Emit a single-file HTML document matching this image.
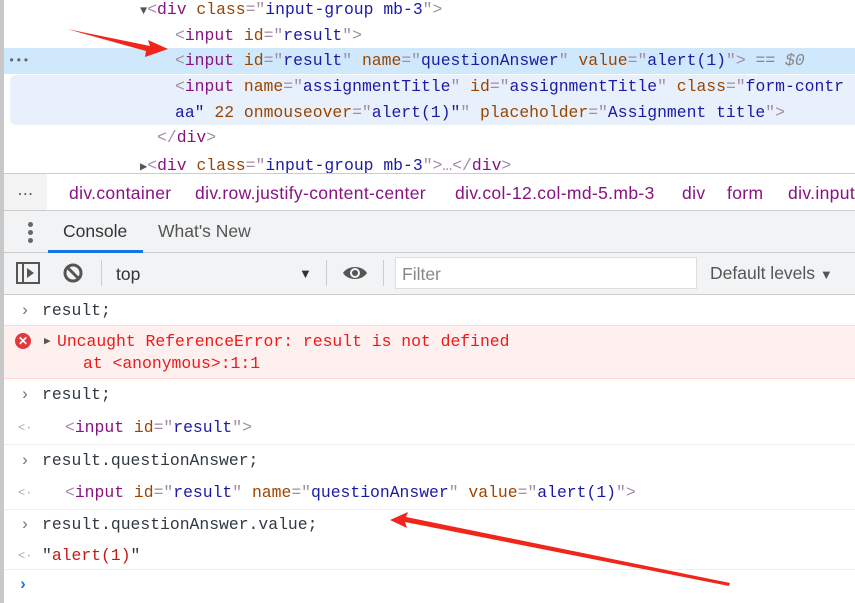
<!DOCTYPE html><html><head><style>
html,body{overflow:hidden}
body{margin:0;width:855px;height:603px;overflow:hidden;background:#fff;position:relative;font-family:"Liberation Mono",monospace;font-size:16.4px}
.a{position:absolute;white-space:pre;line-height:20px}
.t{color:#881280}.n{color:#994500}.v{color:#1a1aa6}.p{color:#a38ca6}.k{color:#303942}
.s{font-family:"Liberation Sans",sans-serif}
.r{position:absolute;left:4px;right:0;overflow:hidden}
.clip{position:absolute;left:0;top:0;width:855px;height:603px;overflow:hidden}
</style></head><body><div class="clip">
<div style="position:absolute;left:0;top:0;width:4px;height:603px;background:#c8c8c8"></div>
<div class="r" style="top:48px;height:26px;background:#cfe8fc"></div>
<div style="position:absolute;left:10px;right:0;top:75px;height:50px;background:#e8f0fb;border-radius:6px 0 0 6px"></div>
<div class="a" style="left:140px;top:0"><span style="color:#555;font-size:12px">▼</span><span class="p">&lt;</span><span class="t">div</span> <span class="n">class</span><span class="p">="</span><span class="v">input-group mb-3</span><span class="p">"&gt;</span></div>
<div class="a" style="left:175px;top:26px"><span class="p">&lt;</span><span class="t">input</span> <span class="n">id</span><span class="p">="</span><span class="v">result</span><span class="p">"&gt;</span></div>
<div class="a" style="left:8px;top:51px;color:#666;font-size:12px">•••</div>
<div class="a" style="left:175px;top:51px"><span class="p">&lt;</span><span class="t">input</span> <span class="n">id</span><span class="p">="</span><span class="v">result</span><span class="p">"</span> <span class="n">name</span><span class="p">="</span><span class="v">questionAnswer</span><span class="p">"</span> <span class="n">value</span><span class="p">="</span><span class="v">alert(1)</span><span class="p">"&gt;</span> <i style="color:#888">== $0</i></div>
<div class="a" style="left:175px;top:77px"><span class="p">&lt;</span><span class="t">input</span> <span class="n">name</span><span class="p">="</span><span class="v">assignmentTitle</span><span class="p">"</span> <span class="n">id</span><span class="p">="</span><span class="v">assignmentTitle</span><span class="p">"</span> <span class="n">class</span><span class="p">="</span><span class="v">form-contr</span></div>
<div class="a" style="left:175px;top:103px"><span class="v">aa"</span> <span class="n">22</span> <span class="n">onmouseover</span><span class="p">="</span><span class="v">alert(1)"</span><span class="p">"</span> <span class="n">placeholder</span><span class="p">="</span><span class="v">Assignment title</span><span class="p">"&gt;</span></div>
<div class="a" style="left:157px;top:128px"><span class="p">&lt;/</span><span class="t">div</span><span class="p">&gt;</span></div>
<div class="a" style="left:140px;top:156px"><span style="color:#555;font-size:12px">▶</span><span class="p">&lt;</span><span class="t">div</span> <span class="n">class</span><span class="p">="</span><span class="v">input-group mb-3</span><span class="p">"&gt;…&lt;/</span><span class="t">div</span><span class="p">&gt;</span></div>
<div class="r" style="top:173px;height:1px;background:#ccc"></div>
<div class="r s" style="top:174px;height:36px;background:#fff;font-size:17.5px;letter-spacing:0.35px;color:#881280">
<div style="position:absolute;left:0;top:0;width:43px;height:36px;background:#f3f3f3;color:#555;text-align:center;line-height:30px">...</div>
<div class="a" style="left:65px;top:9px">div.container</div><div class="a" style="left:191px;top:9px">div.row.justify-content-center</div><div class="a" style="left:451px;top:9px">div.col-12.col-md-5.mb-3</div><div class="a" style="left:678px;top:9px">div</div><div class="a" style="left:723px;top:9px">form</div><div class="a" style="left:784px;top:9px">div.input-group</div></div>
<div class="r" style="top:210px;height:83px;background:#f1f3f4;border-top:1px solid #ccc;border-bottom:1px solid #ccc"></div>
<div class="r" style="top:252px;height:1px;background:#ccc"></div>
<div style="position:absolute;left:28px;top:222px;width:5px;height:5px;border-radius:3px;background:#666;box-shadow:0 8px #666,0 16px #666"></div>
<div class="a s" style="left:63px;top:221px;font-size:17.5px;color:#333">Console</div>
<div class="a s" style="left:158px;top:221px;font-size:17.5px;color:#555">What's New</div>
<div style="position:absolute;left:48px;top:250px;width:95px;height:3px;background:#1a73e8"></div>
<svg style="position:absolute;left:16px;top:262px" width="24" height="22"><rect x="1" y="1" width="22" height="20" fill="none" stroke="#555" stroke-width="2"/><line x1="7" y1="1" x2="7" y2="21" stroke="#555" stroke-width="2"/><path d="M11 6l7 5-7 5z" fill="#555"/></svg>
<svg style="position:absolute;left:63px;top:263px" width="20" height="20"><circle cx="10" cy="10" r="8" fill="none" stroke="#555" stroke-width="3"/><line x1="4.5" y1="4.5" x2="15.5" y2="15.5" stroke="#555" stroke-width="3"/></svg>
<div style="position:absolute;left:101px;top:260px;width:1px;height:26px;background:#ccc"></div>
<div class="a s" style="left:116px;top:264px;font-size:17.5px;color:#333">top</div>
<div class="a s" style="left:299px;top:264px;font-size:13px;color:#333">▼</div>
<div style="position:absolute;left:326px;top:260px;width:1px;height:26px;background:#ccc"></div>
<svg style="position:absolute;left:342px;top:264px" width="26" height="18"><path d="M1 9C6 1 20 1 25 9C20 17 6 17 1 9z" fill="#555"/><circle cx="13" cy="9" r="5" fill="#f1f3f4"/><circle cx="13" cy="9" r="3" fill="#555"/></svg>
<div style="position:absolute;left:383px;top:260px;width:1px;height:26px;background:#ccc"></div>
<div style="position:absolute;left:395px;top:257px;width:300px;height:30px;background:#fff;border:1px solid #ddd"></div>
<div class="a s" style="left:402px;top:264px;font-size:17.5px;color:#888">Filter</div>
<div class="a s" style="left:710px;top:263px;font-size:17.5px;color:#555">Default levels <span style="font-size:13px">▼</span></div>
<div class="r" style="top:325px;height:52px;background:#fff0f0;border-top:1px solid #ffd6d6;border-bottom:1px solid #ffd6d6"></div>
<div class="r" style="top:444px;height:1px;background:#eee"></div>
<div class="r" style="top:509px;height:1px;background:#eee"></div>
<div class="r" style="top:569px;height:1px;background:#eee"></div>
<div class="a k" style="left:20px;top:301px;color:#777">›</div><div class="a k" style="left:42px;top:301px">result;</div>
<div style="position:absolute;left:15px;top:333px;width:16px;height:16px;border-radius:8px;background:#e0393e;color:#fff;font:bold 12px/16px 'Liberation Sans';text-align:center">✕</div>
<div class="a" style="left:44px;top:332px;color:#555;font-size:11px">▶</div>
<div class="a" style="left:57px;top:332px;color:#f01818">Uncaught ReferenceError: result is not defined</div>
<div class="a" style="left:83px;top:354px;color:#f01818">at &lt;anonymous&gt;:1:1</div>
<div class="a k" style="left:20px;top:385px;color:#777">›</div><div class="a k" style="left:42px;top:385px">result;</div>
<div class="a" style="left:18px;top:418px;color:#aaa;font-size:12px">&lt;·</div>
<div class="a" style="left:65px;top:418px"><span class="p">&lt;</span><span class="t">input</span> <span class="n">id</span><span class="p">="</span><span class="v">result</span><span class="p">"&gt;</span></div>
<div class="a k" style="left:20px;top:451px;color:#777">›</div><div class="a k" style="left:42px;top:451px">result.questionAnswer;</div>
<div class="a" style="left:18px;top:483px;color:#aaa;font-size:12px">&lt;·</div>
<div class="a" style="left:65px;top:483px"><span class="p">&lt;</span><span class="t">input</span> <span class="n">id</span><span class="p">="</span><span class="v">result</span><span class="p">"</span> <span class="n">name</span><span class="p">="</span><span class="v">questionAnswer</span><span class="p">"</span> <span class="n">value</span><span class="p">="</span><span class="v">alert(1)</span><span class="p">"&gt;</span></div>
<div class="a k" style="left:20px;top:515px;color:#777">›</div><div class="a k" style="left:42px;top:515px">result.questionAnswer.value;</div>
<div class="a" style="left:18px;top:546px;color:#aaa;font-size:12px">&lt;·</div>
<div class="a k" style="left:42px;top:546px">"<span style="color:#c41a16">alert(1)</span>"</div>
<div class="a" style="left:18px;top:575px;color:#1a73e8;font-weight:bold">›</div>
<svg style="position:absolute;left:0;top:0" width="855" height="603"><path d="M67 29L150 46L148 40L168 49L145 57L146 51Z" fill="#f0261b"/><path d="M390 520L408 512L406 517L730 583L729 586L405 522L407 528Z" fill="#f0261b"/></svg>
</div></body></html>
